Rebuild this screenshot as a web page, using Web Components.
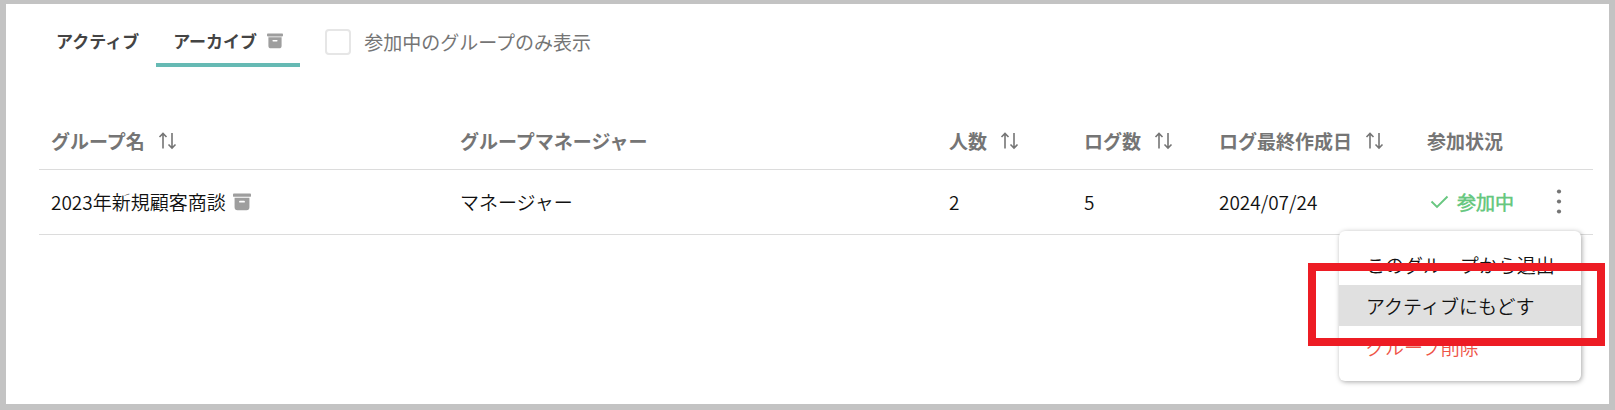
<!DOCTYPE html>
<html lang="ja">
<head>
<meta charset="utf-8">
<meta name="viewport" content="width=device-width, initial-scale=1">
<title>グループ一覧</title>
<style>
    body {
        margin: 0;
        font-family: "Noto Sans CJK JP", sans-serif;
        font-size: 19px;
        line-height: 28px;
        color: #111;
    }
</style>
</head>
<body>
<group-page>
    <tab-bar slot="toolbar">
        <tab-item>アクティブ</tab-item>
        <tab-item selected>アーカイブ<archive-icon slot="icon"></archive-icon></tab-item>
    </tab-bar>
    <check-filter slot="toolbar">参加中のグループのみ表示</check-filter>
    <group-table></group-table>
</group-page>

<script>
class GroupPage extends HTMLElement {
    constructor() {
        super();
        this.attachShadow({ mode: 'open' });
        this.shadowRoot.innerHTML = `
            <style>
                :host {
                    display: flex;
                    box-sizing: border-box;
                    min-height: 100vh;
                    padding: 4px 6px 6px;
                    background-color: #c3c3c3;
                }

                main {
                    flex: 1;
                    min-width: 0;
                    padding: 12px 16px 0 33px;
                    background-color: #fff;
                }

                .toolbar {
                    display: flex;
                    gap: 25px;
                    margin-bottom: 46px;
                }
            </style>
            <main>
                <div class="toolbar"><slot name="toolbar"></slot></div>
                <slot></slot>
            </main>
        `;
    }
}

class ArchiveIcon extends HTMLElement {
    constructor() {
        super();
        this.attachShadow({ mode: 'open' });
        this.shadowRoot.innerHTML = `
            <style>
                :host {
                    display: inline-flex;
                    width: 16px;
                    height: 16px;
                    color: #9e9e9e;
                }

                :host([large]) {
                    width: 18px;
                    height: 18px;
                }

                svg {
                    width: 100%;
                    height: 100%;
                }
            </style>
            <svg viewBox="0 0 16 16" fill="currentColor" aria-hidden="true">
                <rect x="0" y="0.4" width="16" height="3" rx="0.8"/>
                <path fill-rule="evenodd" d="M1.4 4.2h13.2v8.5a2.6 2.6 0 0 1-2.6 2.6H4a2.6 2.6 0 0 1-2.6-2.6zM6.2 6.9a0.8 0.8 0 0 0 0 1.6h3.6a0.8 0.8 0 0 0 0-1.6z"/>
            </svg>
        `;
    }
}

class TabBar extends HTMLElement {
    constructor() {
        super();
        this.attachShadow({ mode: 'open' });
        this.shadowRoot.innerHTML = `
            <style>
                :host {
                    display: flex;
                }
            </style>
            <slot></slot>
        `;
    }

    connectedCallback() {
        this.setAttribute('role', 'tablist');
        this.addEventListener('click', (e) => {
            const tab = e.target.closest('tab-item');
            if (!tab) return;
            this.querySelectorAll('tab-item').forEach((item) => {
                item.toggleAttribute('selected', item === tab);
            });
        });
    }
}

class TabItem extends HTMLElement {
    constructor() {
        super();
        this.attachShadow({ mode: 'open', delegatesFocus: true });
        this.shadowRoot.innerHTML = `
            <style>
                :host {
                    display: block;
                }

                button {
                    display: flex;
                    align-items: center;
                    gap: 10px;
                    height: 51px;
                    padding: 2px 17px 0;
                    border: 0;
                    border-bottom: 4px solid transparent;
                    background: none;
                    font: bold 17px/28px "Noto Sans CJK JP", sans-serif;
                    color: #444;
                    cursor: pointer;
                }

                :host([selected]) button {
                    border-bottom-color: #66bab4;
                }
            </style>
            <button type="button" role="tab"><span><slot></slot></span><slot name="icon"></slot></button>
        `;
        this.button = this.shadowRoot.querySelector('button');
    }

    static get observedAttributes() {
        return ['selected'];
    }

    attributeChangedCallback(name, oldValue, newValue) {
        this.button.setAttribute('aria-selected', newValue !== null);
    }
}

class CheckFilter extends HTMLElement {
    constructor() {
        super();
        this.attachShadow({ mode: 'open', delegatesFocus: true });
        this.shadowRoot.innerHTML = `
            <style>
                :host {
                    display: flex;
                    align-items: center;
                    color: #757575;
                }

                label {
                    display: flex;
                    align-items: center;
                    gap: 13px;
                    cursor: pointer;
                }

                input {
                    appearance: none;
                    width: 26px;
                    height: 26px;
                    margin: 0;
                    border: 2px solid #e6e6e6;
                    border-radius: 4px;
                    background-color: #fff;
                    cursor: pointer;
                }

                input:checked {
                    border-color: #66bab4;
                    background-color: #66bab4;
                }
            </style>
            <label><input type="checkbox"><span><slot></slot></span></label>
        `;
    }
}

class SortButton extends HTMLElement {
    constructor() {
        super();
        this.attachShadow({ mode: 'open', delegatesFocus: true });
        this.shadowRoot.innerHTML = `
            <style>
                :host {
                    display: block;
                }

                button {
                    display: flex;
                    align-items: center;
                    gap: 12px;
                    padding: 0;
                    border: 0;
                    background: none;
                    font: inherit;
                    color: inherit;
                    white-space: nowrap;
                    cursor: pointer;
                }

                svg {
                    width: 22px;
                    height: 18px;
                }
            </style>
            <button type="button">
                <span><slot></slot></span>
                <svg viewBox="0 0 22 18" fill="none" stroke="currentColor" stroke-width="1.6" aria-hidden="true">
                    <path d="M6 16.5V1.500M2.500 5L6 1.500L9.500 5"/>
                    <path d="M15 1V16M11.500 12.500L15 16L18.500 12.500"/>
                </svg>
            </button>
        `;
    }
}

class JoinStatus extends HTMLElement {
    constructor() {
        super();
        this.attachShadow({ mode: 'open' });
        this.shadowRoot.innerHTML = `
            <style>
                :host {
                    display: flex;
                    align-items: center;
                    gap: 8px;
                    padding-left: 3px;
                    font-weight: bold;
                    color: #68c780;
                }

                svg {
                    width: 19px;
                    height: 14px;
                }
            </style>
            <svg viewBox="0 0 19 14" fill="none" stroke="currentColor" stroke-width="1.9" aria-hidden="true">
                <path d="M1.500 6.500l5.500 5.500L17.500 1.500"/>
            </svg>
            <span><slot></slot></span>
        `;
    }
}

class RowMenu extends HTMLElement {
    constructor() {
        super();
        this.attachShadow({ mode: 'open', delegatesFocus: true });
        this.shadowRoot.innerHTML = `
            <style>
                :host {
                    display: block;
                    position: relative;
                    width: 44px;
                }

                .toggle {
                    display: flex;
                    align-items: center;
                    justify-content: center;
                    width: 44px;
                    height: 36px;
                    padding: 0;
                    border: 0;
                    background: none;
                    color: #757575;
                    cursor: pointer;
                }

                .toggle svg {
                    width: 6px;
                    height: 26px;
                }

                .menu {
                    display: none;
                    position: absolute;
                    top: 47px;
                    right: 0;
                    width: 242px;
                    padding: 13px 0 14px;
                    border-radius: 6px;
                    background-color: #fff;
                    box-shadow: 1px 1px 5px rgba(0, 0, 0, 0.35);
                }

                :host([open]) .menu {
                    display: block;
                }
            </style>
            <button class="toggle" type="button" aria-label="メニュー" aria-haspopup="menu">
                <svg viewBox="0 0 6 26" fill="currentColor" aria-hidden="true">
                    <circle cx="3" cy="2.500" r="2.100"/>
                    <circle cx="3" cy="12.500" r="2.100"/>
                    <circle cx="3" cy="22.500" r="2.100"/>
                </svg>
            </button>
            <div class="menu" role="menu"><slot></slot></div>
        `;
        this.shadowRoot.querySelector('.toggle').addEventListener('click', () => {
            this.toggleAttribute('open');
        });
    }
}

class MenuItem extends HTMLElement {
    constructor() {
        super();
        this.attachShadow({ mode: 'open', delegatesFocus: true });
        this.shadowRoot.innerHTML = `
            <style>
                :host {
                    display: block;
                    position: relative;
                }

                button {
                    display: block;
                    width: 100%;
                    height: 41px;
                    padding: 0 27px;
                    border: 0;
                    background: none;
                    font: inherit;
                    color: inherit;
                    text-align: left;
                    white-space: nowrap;
                    cursor: pointer;
                }

                button:hover,
                :host([active]) button {
                    background-color: #e0e0e0;
                }

                :host([danger]) {
                    color: #ee5346;
                }

                /* callout frame, drawn over the neighbouring items */
                :host([callout])::after {
                    content: "";
                    position: absolute;
                    z-index: 1;
                    inset: -22px -24px -20px -31px;
                    border: 8px solid #ed1c24;
                    pointer-events: none;
                }

                :host([callout]) {
                    z-index: 1;
                }
            </style>
            <button type="button" role="menuitem"><slot></slot></button>
        `;
    }
}

class GroupTable extends HTMLElement {
    constructor() {
        super();
        this.attachShadow({ mode: 'open' });
        this.shadowRoot.innerHTML = `
            <style>
                :host {
                    display: block;
                }

                table {
                    width: 100%;
                    table-layout: fixed;
                    border-collapse: separate;
                    border-spacing: 0;
                }

                th,
                td {
                    padding: 0 12px;
                    border-bottom: 1px solid #dcdcdc;
                    text-align: left;
                    white-space: nowrap;
                }

                th {
                    height: 56px;
                    font-weight: bold;
                    color: #757575;
                }

                td {
                    height: 64px;
                    font-family: "Noto Sans CJK JP DemiLight", "Noto Sans CJK JP", sans-serif;
                    font-weight: 350;
                }

                th.name { width: 385px; }
                th.count { width: 111px; }
                th.date { width: 184px; }
                th.status { width: 90px; }
                th.action { width: 40px; }

                .group {
                    display: flex;
                    align-items: center;
                    gap: 7px;
                }

                td.action {
                    padding: 0 8px;
                }
            </style>
            <table>
                <thead>
                    <tr>
                        <th class="name"><sort-button>グループ名</sort-button></th>
                        <th>グループマネージャー</th>
                        <th class="count"><sort-button>人数</sort-button></th>
                        <th class="count"><sort-button>ログ数</sort-button></th>
                        <th class="date"><sort-button>ログ最終作成日</sort-button></th>
                        <th class="status">参加状況</th>
                        <th class="action"></th>
                    </tr>
                </thead>
                <tbody>
                    <tr>
                        <td><div class="group">2023年新規顧客商談<archive-icon large></archive-icon></div></td>
                        <td>マネージャー</td>
                        <td>2</td>
                        <td>5</td>
                        <td>2024/07/24</td>
                        <td><join-status>参加中</join-status></td>
                        <td class="action">
                            <row-menu open>
                                <menu-item>このグループから退出</menu-item>
                                <menu-item active callout>アクティブにもどす</menu-item>
                                <menu-item danger>グループ削除</menu-item>
                            </row-menu>
                        </td>
                    </tr>
                </tbody>
            </table>
        `;
    }
}

customElements.define('group-page', GroupPage);
customElements.define('archive-icon', ArchiveIcon);
customElements.define('tab-bar', TabBar);
customElements.define('tab-item', TabItem);
customElements.define('check-filter', CheckFilter);
customElements.define('sort-button', SortButton);
customElements.define('join-status', JoinStatus);
customElements.define('row-menu', RowMenu);
customElements.define('menu-item', MenuItem);
customElements.define('group-table', GroupTable);
</script>
</body>
</html>
